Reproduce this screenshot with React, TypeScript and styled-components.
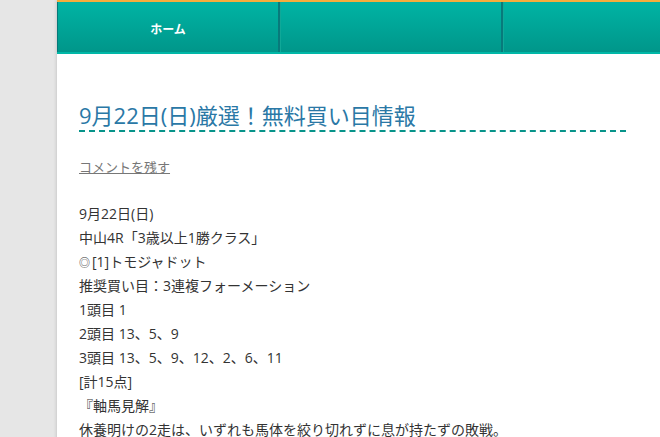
import React from 'react';
import styled, { createGlobalStyle } from 'styled-components';

const GlobalStyle = createGlobalStyle`
  html, body {
    margin: 0;
    padding: 0;
    background: #e6e6e6;
    overflow: hidden;
  }
  body {
    font-family: 'Open Sans', 'Noto Sans CJK JP', sans-serif;
  }
`;

const Page = styled.div`
  margin-left: 57px;
  width: 700px;
  min-height: 437px;
  background: #ffffff;
  border-top: 2px solid #f5ad3d;
  box-shadow: -1px 0 3px rgba(0, 0, 0, 0.12);
`;

const Nav = styled.nav`
  display: flex;
  height: 50px;
  background: linear-gradient(to bottom, #00b4a4 0%, #00968a 100%);
  border-bottom: 2px solid #00b7a7;
`;

const NavItem = styled.a<{ first?: boolean }>`
  box-sizing: border-box;
  flex: 0 0 223px;
  display: flex;
  align-items: center;
  justify-content: center;
  color: #ffffff;
  font-weight: 700;
  font-size: 12px;
  text-decoration: none;
  border-left: ${p => (p.first ? '1px solid #06797a' : '1px solid #10a898')};
  border-right: 2px solid #087a7b;
  padding-top: 3px;
`;

const Content = styled.main`
  padding: 49px 0 0 22px;
  width: 547px;
`;

const Title = styled.h1`
  margin: 0;
  padding-bottom: 3px;
  font-size: 22px;
  font-weight: 400;
  line-height: 24px;
  color: #2a78a6;
  border-bottom: 2px dashed #07948a;
  white-space: nowrap;
`;

const CommentLink = styled.a`
  display: block;
  width: max-content;
  margin-top: 25px;
  font-size: 13px;
  line-height: 20px;
  color: #777777;
  text-decoration: underline;
`;

const Body = styled.div`
  margin-top: 25px;
  font-size: 14px;
  color: #333333;
`;

const Line = styled.div`
  height: 24px;
  line-height: 24px;
  white-space: nowrap;
`;

const Mark = styled.span`
  font-size: 11px;
  margin-right: 2px;
`;

const lines = [
  '9月22日(日)',
  '中山4R「3歳以上1勝クラス」',
  '◎[1]トモジャドット',
  '推奨買い目：3連複フォーメーション',
  '1頭目 1',
  '2頭目 13、5、9',
  '3頭目 13、5、9、12、2、6、11',
  '[計15点]',
  '『軸馬見解』',
  '休養明けの2走は、いずれも馬体を絞り切れずに息が持たずの敗戦。',
];

export default function App() {
  return (
    <>
      <GlobalStyle />
      <Page>
        <Nav>
          <NavItem first href="#">ホーム</NavItem>
          <NavItem href="#" />
          <NavItem href="#" />
        </Nav>
        <Content>
          <Title>9月22日(日)厳選！無料買い目情報</Title>
          <CommentLink href="#">コメントを残す</CommentLink>
          <Body>
            {lines.map(l =>
              l.startsWith('◎') ? (
                <Line key={l}>
                  <Mark>◎</Mark>
                  {l.slice(1)}
                </Line>
              ) : (
                <Line key={l}>{l}</Line>
              ),
            )}
          </Body>
        </Content>
      </Page>
    </>
  );
}
